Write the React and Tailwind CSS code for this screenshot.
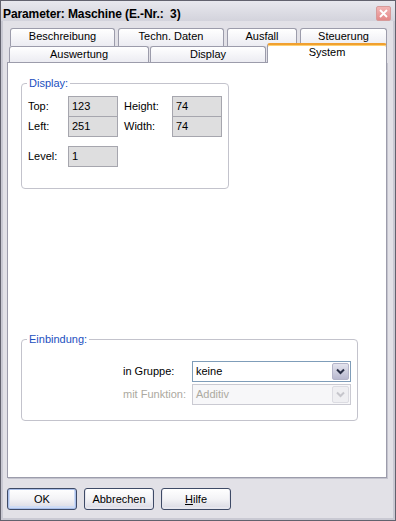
import React from "react";

const font = { fontFamily: '"Liberation Sans", Arial, sans-serif' };

function Tab1({ w, label }) {
  return (
    <div
      className={`h-[18px] border border-b-0 border-[#9c9cab] rounded-t-[3px] bg-gradient-to-b from-white to-[#ececf2] flex items-start justify-center pt-[1px] text-[11px] leading-[13px] text-black`}
      style={{ width: w }}
    >
      {label}
    </div>
  );
}

function Tab2({ w, label }) {
  return (
    <div
      className="h-[16px] border border-b-0 border-[#9c9cab] rounded-t-[3px] bg-gradient-to-b from-white to-[#ececf2] flex items-start justify-center pt-[1px] text-[11px] leading-[13px] text-black"
      style={{ width: w }}
    >
      {label}
    </div>
  );
}

function RoField({ value, className = "" }) {
  return (
    <div className={`w-[50px] h-[21px] border border-[#a6a6ae] bg-[#dededf] flex items-center pl-[3px] text-[11px] text-black ${className}`}>
      {value}
    </div>
  );
}

function Chevron({ color }) {
  return (
    <svg width="9" height="7" viewBox="0 0 9 7">
      <path d="M1 1.5 L4.5 5 L8 1.5" fill="none" stroke={color} strokeWidth="2" />
    </svg>
  );
}

function Button({ children, def }) {
  return (
    <div
      className={`w-[70px] h-[22px] rounded-[3px] border border-[#3e4a66] bg-gradient-to-b from-white via-[#f3f3f6] to-[#d9d9e3] flex items-center justify-center text-[11px] text-black ${def ? "shadow-[inset_0_0_0_1px_#a9bfea,inset_0_-1px_0_2px_#cfdcf5]" : "shadow-[inset_0_-1px_0_1px_#e6e6ee]"}`}
    >
      {children}
    </div>
  );
}

export default function App() {
  return (
    <div className="w-[396px] h-[521px] border border-[#62626e] bg-[#e2e1e7] flex flex-col" style={font}>
      {/* Title bar */}
      <div className="h-[20px] bg-gradient-to-b from-[#e8e8ee] to-[#d3d3dc] flex items-center justify-between pl-[2px] pr-[4px]">
        <div className="text-[12px] font-bold text-black tracking-[-0.1px] mt-[5px]">Parameter: Maschine (E.-Nr.:&nbsp; 3)</div>
        <div className="w-[15px] h-[15px] mt-[5px] rounded-[2px] border border-[#d69a9a] bg-gradient-to-b from-[#f2b6b6] to-[#e48888] flex items-center justify-center">
          <svg width="9" height="9" viewBox="0 0 9 9">
            <path d="M1 1 L8 8 M8 1 L1 8" stroke="white" strokeWidth="1.8" />
          </svg>
        </div>
      </div>

      {/* Frame body */}
      <div className="flex-1 border-x-[2px] border-b-[2px] border-[#c9c9d3] flex flex-col pl-[4px]">
        {/* Tabs row 1 */}
        <div className="mt-[7px] ml-[3px] flex gap-[3px]">
          <Tab1 w={105} label="Beschreibung" />
          <Tab1 w={106} label="Techn. Daten" />
          <Tab1 w={70} label="Ausfall" />
          <Tab1 w={87} label="Steuerung" />
        </div>
        {/* Tabs row 2 */}
        <div className="ml-[2px] flex items-start h-[16px] gap-[1px]">
          <Tab2 w={140} label="Auswertung" />
          <Tab2 w={116} label="Display" />
          <div className="relative z-10 -mt-[3px] w-[120px] h-[20px] bg-white border-x border-[#9c9cab] rounded-t-[3px] border-t-[2px] border-t-[#f0a030] shadow-[inset_0_1px_0_#ffd070] flex justify-center pt-[1px] text-[11px] leading-[13px] text-black">
            System
          </div>
        </div>

        {/* Panel */}
        <div className="w-[380px] h-[416px] bg-white border border-[#9c9cab] shadow-[1px_1px_0_#c4c4ce] flex flex-col">
          {/* Display group */}
          <div className="mt-[20px] ml-[13px] w-[208px] h-[106px] border border-[#c3c3cc] rounded-[4px] flex flex-col">
            <div className="-mt-[7px] ml-[5px] px-[2px] w-fit bg-white text-[11px] leading-[13px] text-[#1c4fc0]">Display:</div>
            <div className="mt-[6px] ml-[6px] flex items-center">
              <div className="w-[40px] text-[11px] text-black">Top:</div>
              <RoField value="123" />
              <div className="ml-[6px] w-[48px] text-[11px] text-black">Height:</div>
              <RoField value="74" />
            </div>
            <div className="-mt-[1px] ml-[6px] flex items-center">
              <div className="w-[40px] text-[11px] text-black">Left:</div>
              <RoField value="251" />
              <div className="ml-[6px] w-[48px] text-[11px] text-black">Width:</div>
              <RoField value="74" />
            </div>
            <div className="mt-[9px] ml-[6px] flex items-center">
              <div className="w-[40px] text-[11px] text-black">Level:</div>
              <RoField value="1" />
            </div>
          </div>

          {/* Einbindung group */}
          <div className="mt-[150px] ml-[13px] w-[337px] h-[82px] border border-[#c3c3cc] rounded-[4px] flex flex-col">
            <div className="-mt-[7px] ml-[5px] px-[2px] w-fit bg-white text-[11px] leading-[13px] text-[#1c4fc0]">Einbindung:</div>
            <div className="mt-[15px] ml-[101px] flex items-center">
              <div className="w-[69px] text-[11px] text-black">in Gruppe:</div>
              <div className="w-[159px] h-[21px] border border-[#7f9db9] bg-white flex items-center justify-between pl-[3px] pr-[1px]">
                <span className="text-[11px] text-black">keine</span>
                <div className="w-[17px] h-[17px] rounded-[2px] border border-[#b4b4c8] bg-gradient-to-b from-[#e4e4ee] to-[#b9b9cf] flex items-center justify-center">
                  <Chevron color="#2a2f45" />
                </div>
              </div>
            </div>
            <div className="mt-[2px] ml-[101px] flex items-center">
              <div className="w-[69px] text-[11px] text-[#aca9a0]">mit Funktion:</div>
              <div className="w-[159px] h-[21px] border border-[#cacad2] bg-[#f7f7f9] flex items-center justify-between pl-[3px] pr-[1px]">
                <span className="text-[11px] text-[#aca9a0]">Additiv</span>
                <div className="w-[17px] h-[17px] rounded-[2px] border border-[#dcdce2] bg-[#efeff2] flex items-center justify-center">
                  <Chevron color="#c6c6cc" />
                </div>
              </div>
            </div>
          </div>
        </div>

        {/* Buttons */}
        <div className="mt-[10px] flex gap-[7px]">
          <Button def>OK</Button>
          <Button>Abbrechen</Button>
          <Button>
            <span><span className="underline">H</span>ilfe</span>
          </Button>
        </div>
      </div>
    </div>
  );
}
